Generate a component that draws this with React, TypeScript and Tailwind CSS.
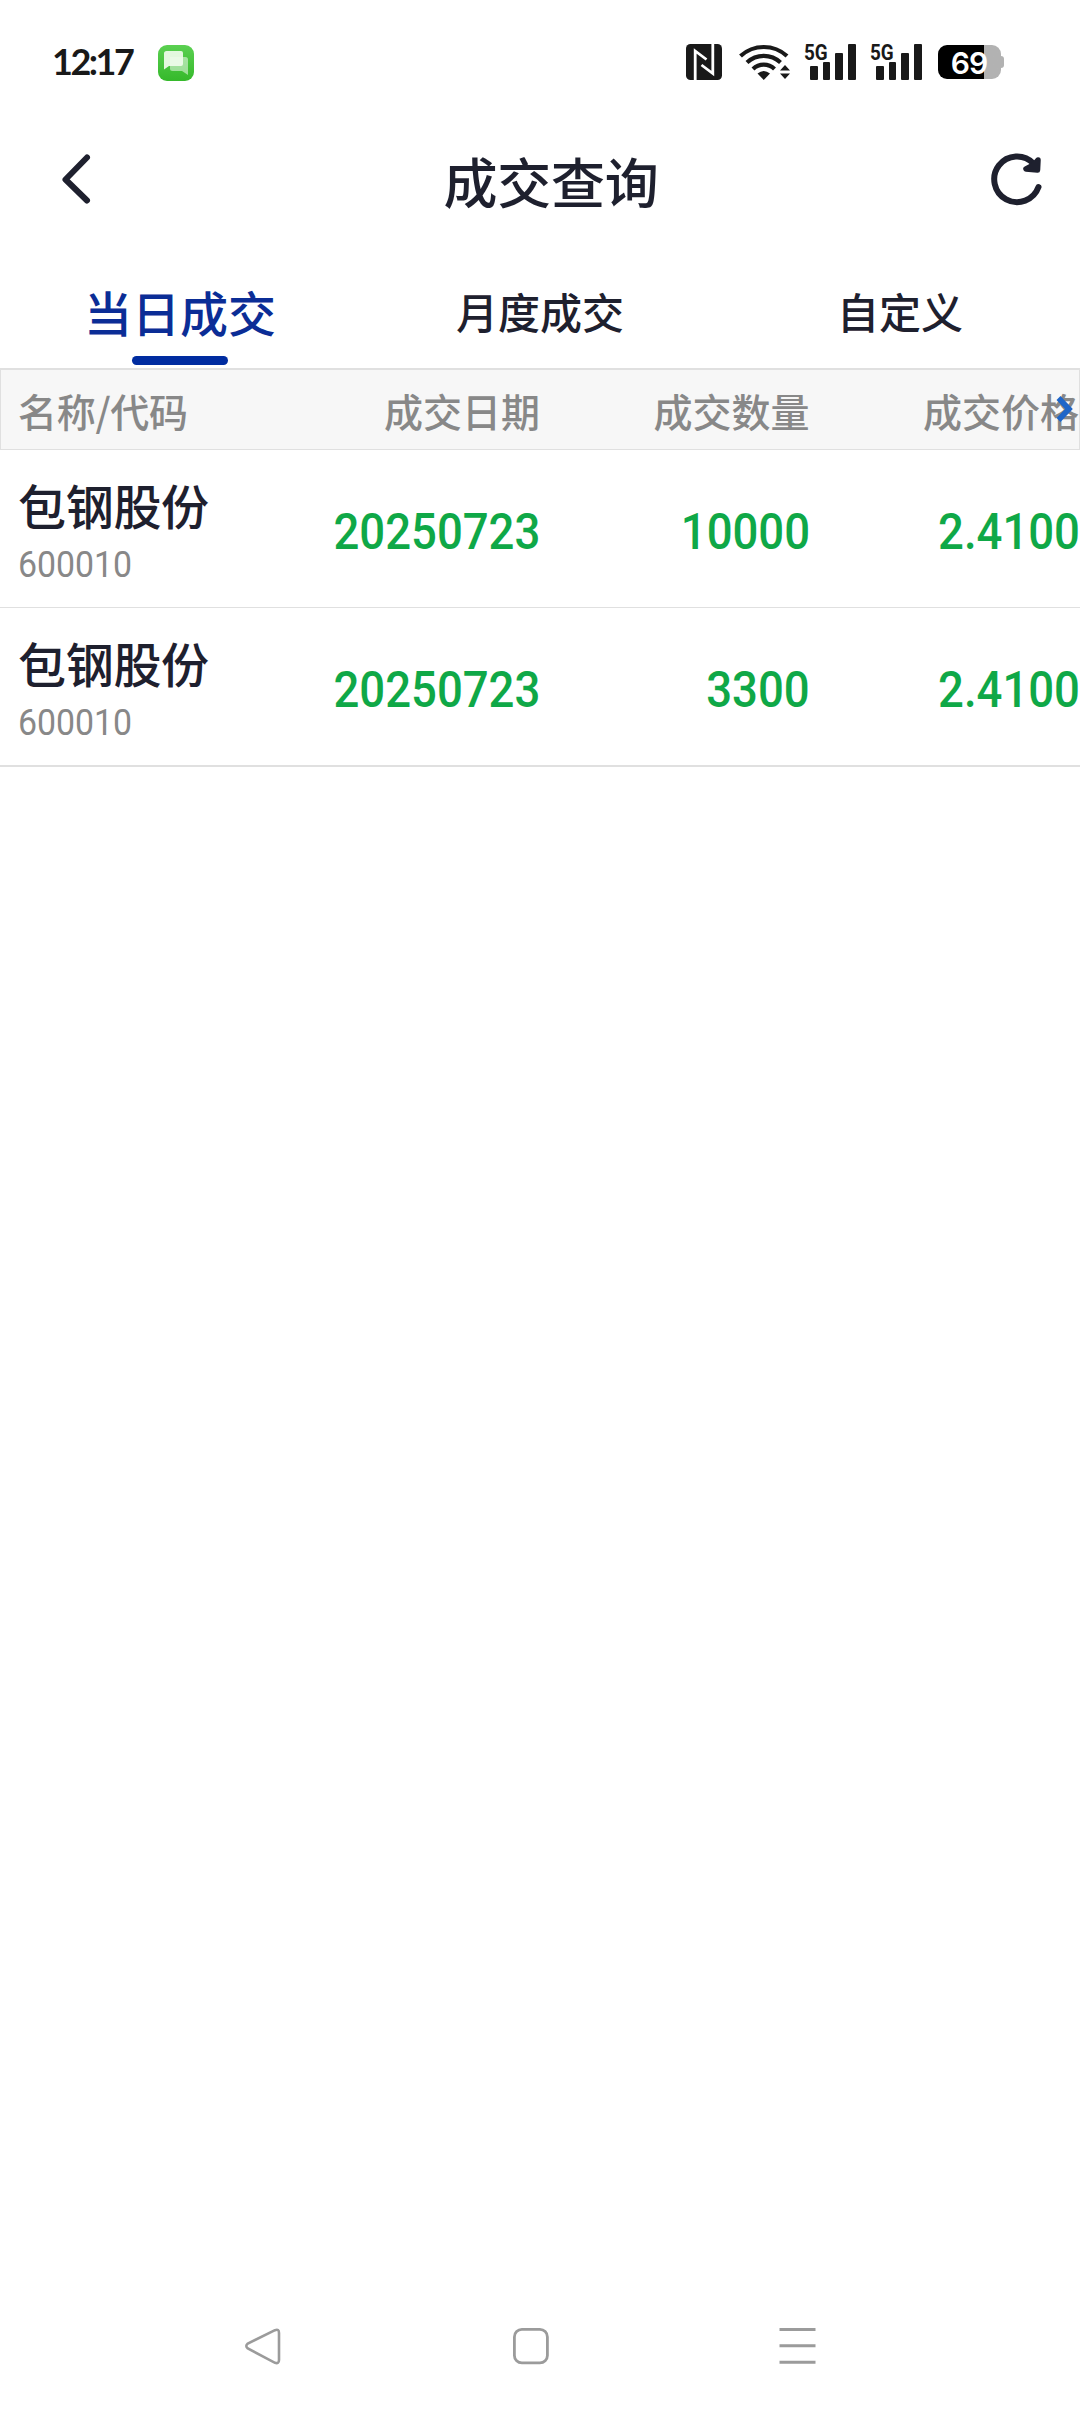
import React from "react";

const cjk = "font-['Noto_Sans_CJK_SC',sans-serif]";

const trades = [
  { name: "包钢股份", code: "600010", date: "20250723", qty: "10000", price: "2.4100" },
  { name: "包钢股份", code: "600010", date: "20250723", qty: "3300", price: "2.4100" },
];

function MessageIcon() {
  return (
    <svg width="36" height="36" viewBox="0 0 36 36" className="ml-[25px]">
      <defs>
        <linearGradient id="msg" x1="0" y1="0" x2="0" y2="1">
          <stop offset="0" stopColor="#5bd051" />
          <stop offset="1" stopColor="#35b92b" />
        </linearGradient>
      </defs>
      <rect width="36" height="36" rx="9" fill="url(#msg)" />
      <path d="M12 12h15.500q2.500 0 2.500 2.500v15.500l-6-4h-9.500q-2.500 0-2.500-2.500z" fill="#fff" fillOpacity=".5" />
      <path d="M8.500 6h14.500q2 0 2 2v11q0 2-2 2h-12l-5 3.500v-16q0-2.500 2.500-2.500z" fill="#f0fcec" fillOpacity=".92" />
    </svg>
  );
}

function NfcIcon() {
  return (
    <svg width="36" height="36" viewBox="0 0 36 36" fill="none">
      <rect width="36" height="36" rx="4.500" fill="#191919" />
      <path d="M9.200 36V7L20.500 15.500M26.800 0V29.500L15.500 21" stroke="#fff" strokeWidth="2.800" />
    </svg>
  );
}

function WifiIcon() {
  return (
    <svg width="52" height="36" viewBox="0 0 52 36" fill="none" className="ml-[17px]">
      <g stroke="#191919" strokeWidth="4.200">
        <path d="M1.500 12a34.500 34.500 0 0 1 46.500 0" />
        <path d="M8 18.500a24.500 24.500 0 0 1 33.500 0" />
        <path d="M14 25a15.500 15.500 0 0 1 21.500 0" />
      </g>
      <path d="M18.500 29.500q6.250-5 12.500 0L24.750 36z" fill="#191919" />
      <path d="M41 26.500l5-5.500 5 5.500zM41 29.500h10l-5 5.500z" fill="#191919" />
    </svg>
  );
}

function Signal() {
  return (
    <div className="relative ml-[14px] h-9 w-[52px]">
      <span className="absolute -top-[3px] -left-px origin-left scale-x-[0.84] font-[Roboto,sans-serif] text-[22.5px] leading-[22px] font-bold text-[#191919]">
        5G
      </span>
      <div className="flex h-9 items-end gap-[5.2px] pl-[5px]">
        <i className="h-[14px] w-[7.5px] rounded-[1px] bg-[#191919]" />
        <i className="h-[18px] w-[7.5px] rounded-[1px] bg-[#191919]" />
        <i className="h-[27px] w-[7.5px] rounded-[1px] bg-[#191919]" />
        <i className="h-9 w-[7.5px] rounded-[1px] bg-[#191919]" />
      </div>
    </div>
  );
}

function Battery() {
  return (
    <div className="ml-[15px] flex items-center">
      <div className="flex h-[34px] w-[63px] items-center justify-center rounded-[9px] bg-linear-to-r from-black from-[73%] to-[#b2b2b2] to-[73%]">
        <span className="mt-[2px] mr-[1px] font-[Inter,sans-serif] text-[30px] leading-8 font-semibold tracking-[-1px] text-white">69</span>
      </div>
      <i className="h-3 w-[3px] rounded-r-[3px] bg-[#b2b2b2]" />
    </div>
  );
}

function StatusBar() {
  return (
    <div className="flex h-[125px] items-start justify-between pt-11 pr-[76px] pl-[52px]">
      <div className="flex items-center pt-px">
        <span className="-mt-[4px] w-[81px] font-[Lato,sans-serif] text-[36px] leading-9 font-bold tracking-[-2.5px] whitespace-nowrap text-[#191919]">
          12:17
        </span>
        <MessageIcon />
      </div>
      <div className="flex items-center">
        <NfcIcon />
        <WifiIcon />
        <Signal />
        <Signal />
        <Battery />
      </div>
    </div>
  );
}

function Header() {
  return (
    <header className="flex h-[125px] items-center justify-between pr-[36px] pl-[60px]">
      <svg width="34" height="54" viewBox="0 0 34 54" fill="none" className="-mt-[17px]">
        <path d="M27 5.500L5.500 27.500L27 48.500" stroke="#1e202e" strokeWidth="6" strokeLinecap="round" strokeLinejoin="round" />
      </svg>
      <h1 className={`${cjk} -mt-[13px] ml-[18px] text-[54px] leading-[60px] font-medium tracking-[-0.3px] text-[#1e202e]`}>成交查询</h1>
      <svg width="54" height="54" viewBox="0 0 54 54" fill="none" className="-mt-[17px]">
        <path d="M48.500 35A22.800 22.800 0 1 1 43.500 11.500" stroke="#1e202e" strokeWidth="6" strokeLinecap="round" />
        <path d="M36 17L47.500 18L48 8L43.500 13z" fill="#1e202e" stroke="#1e202e" strokeWidth="5.500" strokeLinejoin="round" />
      </svg>
    </header>
  );
}

function Tabs() {
  return (
    <nav className={`${cjk} grid h-[118px] grid-cols-3 text-center text-[42px] leading-[60px] font-medium text-[#1e202e]`}>
      <div className="flex flex-col items-center pt-[31px] text-[48px] text-[#0b2d96]">
        当日成交
        <i className="mt-[15px] h-[9px] w-24 rounded-full bg-[#002ca0]" />
      </div>
      <div className="pt-[31px]">月度成交</div>
      <div className="pt-[31px]">自定义</div>
    </nav>
  );
}

function Num({ children }: { children: string }) {
  return (
    <div className="pt-[7px] text-right font-[Roboto,sans-serif] text-[50px] leading-[60px] font-medium text-[#0fa847]">
      <span className="inline-block origin-right scale-x-[0.91]">{children}</span>
    </div>
  );
}

export default function App() {
  return (
    <div className="flex h-[2412px] w-[1080px] flex-col overflow-hidden bg-white">
      <StatusBar />
      <Header />
      <Tabs />
      <div className={`${cjk} relative grid h-[82px] grid-cols-4 border border-t-2 border-[#e0e0e0] bg-[#f7f7f7] pt-[11px] text-right text-[39px] leading-[58px] font-medium text-[#888]`}>
        <div className="pl-[17px] text-left tracking-[-0.3px]">名称/代码</div>
        <div>成交日期</div>
        <div>成交数量</div>
        <div>成交价格</div>
        <svg width="18" height="26" viewBox="0 0 18 26" fill="none" className="absolute top-[26px] right-[6px]">
          <path d="M3.500 2L14 13L3.500 24" stroke="#1f66c8" strokeWidth="5.500" />
        </svg>
      </div>
      {trades.map((t, i) => (
        <div
          key={i}
          className={`grid grid-cols-4 items-center border-[#e0e0e0] ${i === trades.length - 1 ? "h-[159px] border-b-2" : "h-[158px] border-b"}`}
        >
          <div className="pt-[10px] pl-[18px]">
            <div className={`${cjk} text-[48px] leading-[60px] font-medium tracking-[-0.3px] whitespace-nowrap text-[#1e202e]`}>{t.name}</div>
            <div className="mt-[3px] font-[Roboto,sans-serif] text-[36px] leading-[56px] text-[#888]">
              <span className="inline-block origin-left scale-x-[0.94]">{t.code}</span>
            </div>
          </div>
          <Num>{t.date}</Num>
          <Num>{t.qty}</Num>
          <Num>{t.price}</Num>
        </div>
      ))}
      <div className="mt-auto flex h-[85px] justify-between pr-[264px] pl-[244px]">
        <svg width="38" height="38" viewBox="0 0 38 38" fill="none" stroke="#9b9b9b" strokeWidth="2.600">
          <path d="M31 3.200L3.800 16.500Q0.800 19 3.800 21.500L31 35.800Q35 37 35 33V6Q35 1.500 31 3.200Z" />
        </svg>
        <svg width="36" height="38" viewBox="0 0 36 38" fill="none" stroke="#9b9b9b" strokeWidth="2.800">
          <rect x="1.400" y="2.400" width="33" height="33.500" rx="7.500" />
        </svg>
        <svg width="37" height="38" viewBox="0 0 37 38" fill="none" stroke="#9b9b9b" strokeWidth="3">
          <path d="M0.500 2.500h36M0.500 18.800h36M0.500 35.200h36" />
        </svg>
      </div>
    </div>
  );
}
